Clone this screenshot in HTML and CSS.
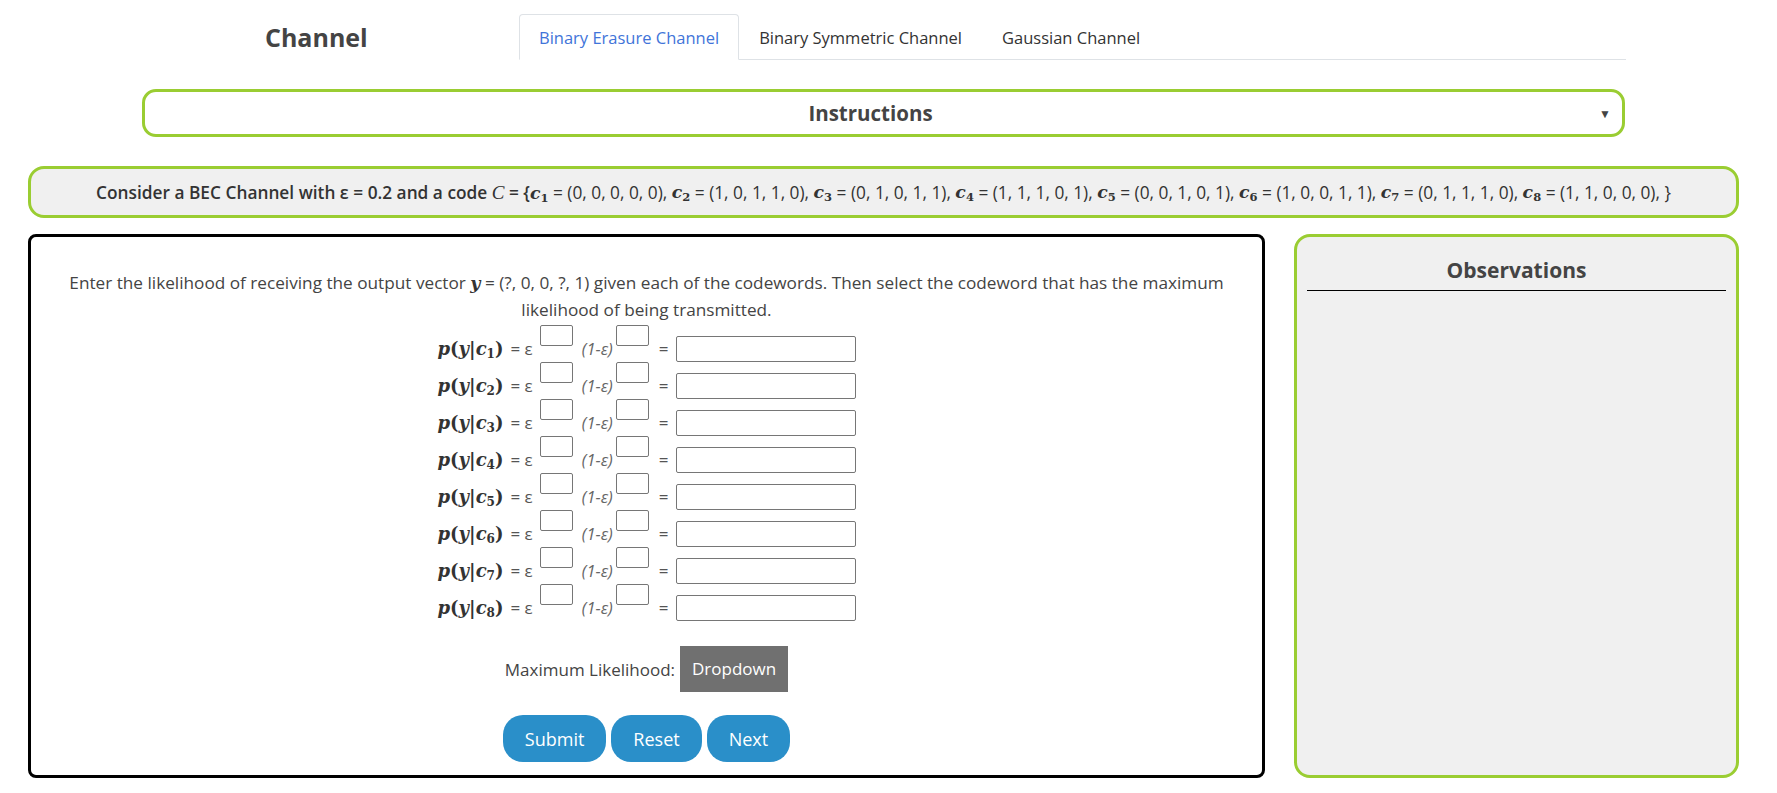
FILE: index.html
```html
<!DOCTYPE html>
<html lang="en">
<head>
<meta charset="utf-8">
<title>Channel</title>
<link rel="stylesheet" href="styles.css">
</head>
<body>
<header class="header">
  <div class="title">Channel</div>
  <ul class="tabs">
    <li class="tab active">Binary Erasure Channel</li>
    <li class="tab">Binary Symmetric Channel</li>
    <li class="tab">Gaussian Channel</li>
  </ul>
</header>

<div class="instructions">
  <span class="instr-title">Instructions</span>
  <span class="caret">&#9660;</span>
</div>

<div class="problem">
  <span class="strong">Consider a BEC Channel with ε = 0.2 and a code <span class="cal">C</span> = {<span class="mv">c<sub>1</sub></span></span> = (0, 0, 0, 0, 0), <span class="mv">c<sub>2</sub></span> = (1, 0, 1, 1, 0), <span class="mv">c<sub>3</sub></span> = (0, 1, 0, 1, 1), <span class="mv">c<sub>4</sub></span> = (1, 1, 1, 0, 1), <span class="mv">c<sub>5</sub></span> = (0, 0, 1, 0, 1), <span class="mv">c<sub>6</sub></span> = (1, 0, 0, 1, 1), <span class="mv">c<sub>7</sub></span> = (0, 1, 1, 1, 0), <span class="mv">c<sub>8</sub></span> = (1, 1, 0, 0, 0), }
</div>

<main class="main">
  <section class="work">
    <p class="prompt">Enter the likelihood of receiving the output vector <span class="mv">y</span> = (?, 0, 0, ?, 1) given each of the codewords. Then select the codeword that has the maximum<br>likelihood of being transmitted.</p>

    <div class="rows">
      <div class="eq-row"><span class="lbl"><i>p</i>(<i>y</i>|<i>c</i><sub>1</sub>)</span><span class="eq">= ε</span><input class="sup" type="text"><span class="one">(1-ε)</span><input class="sup" type="text"><span class="eq2">=</span><input class="res" type="text"></div>
      <div class="eq-row"><span class="lbl"><i>p</i>(<i>y</i>|<i>c</i><sub>2</sub>)</span><span class="eq">= ε</span><input class="sup" type="text"><span class="one">(1-ε)</span><input class="sup" type="text"><span class="eq2">=</span><input class="res" type="text"></div>
      <div class="eq-row"><span class="lbl"><i>p</i>(<i>y</i>|<i>c</i><sub>3</sub>)</span><span class="eq">= ε</span><input class="sup" type="text"><span class="one">(1-ε)</span><input class="sup" type="text"><span class="eq2">=</span><input class="res" type="text"></div>
      <div class="eq-row"><span class="lbl"><i>p</i>(<i>y</i>|<i>c</i><sub>4</sub>)</span><span class="eq">= ε</span><input class="sup" type="text"><span class="one">(1-ε)</span><input class="sup" type="text"><span class="eq2">=</span><input class="res" type="text"></div>
      <div class="eq-row"><span class="lbl"><i>p</i>(<i>y</i>|<i>c</i><sub>5</sub>)</span><span class="eq">= ε</span><input class="sup" type="text"><span class="one">(1-ε)</span><input class="sup" type="text"><span class="eq2">=</span><input class="res" type="text"></div>
      <div class="eq-row"><span class="lbl"><i>p</i>(<i>y</i>|<i>c</i><sub>6</sub>)</span><span class="eq">= ε</span><input class="sup" type="text"><span class="one">(1-ε)</span><input class="sup" type="text"><span class="eq2">=</span><input class="res" type="text"></div>
      <div class="eq-row"><span class="lbl"><i>p</i>(<i>y</i>|<i>c</i><sub>7</sub>)</span><span class="eq">= ε</span><input class="sup" type="text"><span class="one">(1-ε)</span><input class="sup" type="text"><span class="eq2">=</span><input class="res" type="text"></div>
      <div class="eq-row"><span class="lbl"><i>p</i>(<i>y</i>|<i>c</i><sub>8</sub>)</span><span class="eq">= ε</span><input class="sup" type="text"><span class="one">(1-ε)</span><input class="sup" type="text"><span class="eq2">=</span><input class="res" type="text"></div>
    </div>

    <div class="ml-row">
      <span class="ml-label">Maximum Likelihood:</span>
      <span class="dropdown">Dropdown</span>
    </div>

    <div class="btn-row">
      <button class="btn" type="button">Submit</button>
      <button class="btn" type="button">Reset</button>
      <button class="btn" type="button">Next</button>
    </div>
  </section>

  <aside class="obs">
    <h2 class="obs-title">Observations</h2>
  </aside>
</main>
</body>
</html>
```

FILE: styles.css
```css
* { box-sizing: border-box; }

body {
  margin: 0;
  font-family: "Open Sans", "Noto Sans", sans-serif;
  color: #444;
  background: #fff;
}

.header {
  display: flex;
  height: 46px;
  margin: 14px 151px 0 265px;
}

.title {
  width: 254px;
  font-size: 25px;
  font-weight: 700;
  align-self: center;
  color: #444;
}

.tabs {
  flex: 1;
  display: flex;
  list-style: none;
  margin: 0;
  padding: 0;
  border-bottom: 1px solid #dee2e6;
}

.tab {
  display: flex;
  align-items: center;
  padding: 0 19px;
  font-size: 16.5px;
  color: #333;
  border: 1px solid transparent;
  border-radius: 4px 4px 0 0;
  margin-bottom: -1px;
}

.tab.active {
  color: #4174d9;
  background: #fff;
  border-color: #dee2e6 #dee2e6 #fff;
}

.instructions {
  display: flex;
  align-items: center;
  height: 48px;
  margin: 29px 152px 0 142px;
  border: 3px solid yellowgreen;
  border-radius: 14px;
  background: #fff;
}

.instr-title {
  flex: 1;
  text-align: center;
  font-size: 20.5px;
  font-weight: 700;
  color: #444;
}

.caret {
  width: 26px;
  padding-right: 11px;
  text-align: right;
  font-size: 12px;
  color: #444;
}

.problem {
  display: flex;
  align-items: center;
  justify-content: center;
  height: 52px;
  margin: 29px 38px 0 28px;
  border: 3px solid yellowgreen;
  border-radius: 16px;
  background: #f0f0f0;
  font-size: 17.3px;
  color: #333;
  white-space: pre;
}

.strong { font-weight: 600; }

.cal {
  font-family: "Liberation Serif", serif;
  font-style: italic;
  font-size: 19px;
  font-weight: 400;
}

.mv {
  font-family: "DejaVu Serif", serif;
  font-weight: 700;
  font-style: italic;
  font-size: 17.3px;
  color: #333;
}

.mv sub {
  font-style: normal;
  font-size: 11.5px;
  vertical-align: -3px;
  line-height: 0;
}

.main {
  display: flex;
  gap: 29px;
  height: 544px;
  margin: 16px 38px 0 28px;
}

.work {
  width: 1237px;
  border: 3px solid #000;
  border-radius: 8px;
  padding-top: 33px;
  text-align: center;
  background: #fff;
}

.prompt {
  margin: 0;
  font-size: 17.2px;
  line-height: 26.5px;
  color: #444;
}

.prompt .mv { font-size: 17.5px; color: #333; }

.rows {
  display: flex;
  flex-direction: column;
  align-items: center;
  margin-top: 2px;
}

.eq-row {
  display: flex;
  height: 37px;
  align-items: flex-end;
}

.lbl {
  width: 67px;
  height: 26px;
  line-height: 26px;
  font-family: "DejaVu Serif", serif;
  font-weight: 700;
  font-size: 18px;
  color: #333;
  text-align: left;
  white-space: nowrap;
}

.lbl sub {
  font-size: 12px;
  line-height: 0;
  vertical-align: -3px;
}

.eq {
  height: 26px;
  line-height: 26px;
  margin-left: 6px;
  font-size: 17px;
  color: #555;
}

.sup {
  align-self: flex-start;
  width: 33px;
  height: 21px;
  margin-left: 7px;
  border: 1px solid #767676;
  border-radius: 2px;
  background: #fff;
  padding: 0;
}

.one {
  height: 26px;
  line-height: 26px;
  margin-left: 9px;
  margin-right: 3px;
  font-size: 16.5px;
  font-style: italic;
  color: #666;
}

.one + .sup { margin-left: 0; }

.eq2 {
  height: 26px;
  line-height: 26px;
  margin-left: 10px;
  font-size: 17px;
  color: #555;
}

.res {
  width: 180px;
  height: 26px;
  margin-left: 7px;
  border: 1px solid #767676;
  border-radius: 2px;
  background: #fff;
  padding: 0 4px;
}

.ml-row {
  display: flex;
  justify-content: center;
  align-items: center;
  gap: 5px;
  margin-top: 25px;
}

.ml-label {
  font-size: 17px;
  color: #444;
}

.dropdown {
  height: 46px;
  line-height: 46px;
  padding: 0 12px;
  background: #707070;
  color: #fff;
  font-size: 17px;
}

.btn-row {
  display: flex;
  justify-content: center;
  gap: 5px;
  margin-top: 23px;
}

.btn {
  height: 47px;
  padding: 0 22px;
  border: none;
  border-radius: 20px;
  background: #2a8fc9;
  color: #fff;
  font-family: "Open Sans", sans-serif;
  font-size: 18px;
}

.obs {
  flex: 1;
  border: 3px solid yellowgreen;
  border-radius: 16px;
  background: #f0f0f0;
  padding: 18px 10px 0;
}

.obs-title {
  margin: 0;
  padding-bottom: 5px;
  border-bottom: 1px solid #000;
  font-size: 21px;
  line-height: 30px;
  font-weight: 700;
  text-align: center;
  color: #444;
}
```
